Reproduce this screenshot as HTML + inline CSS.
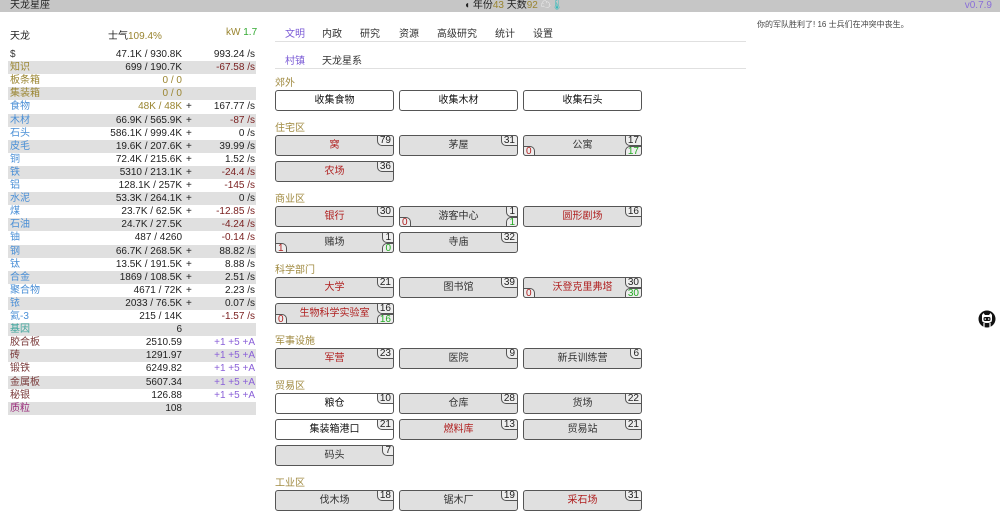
<!DOCTYPE html>
<html><head><meta charset="utf-8"><style>
*{margin:0;padding:0;box-sizing:border-box}
body{width:1000px;height:501px;overflow:hidden;background:#fff;font-family:"Liberation Sans","Noto Sans CJK SC",sans-serif;font-size:10px;color:#222;position:relative}
.top{position:absolute;left:0;top:0;width:1000px;height:12px;background:#c6c6c6;font-size:10px;line-height:12px}
.g{color:#9a8530}.gr{color:#3a3}.bl{color:#4a8fd6}.tl{color:#3aa39a}.rd{color:#7a2020}.br{color:#7a3a3a}.pu{color:#8a60d8}.mg{color:#9a2a7a}
.row{position:absolute;left:8px;width:248px;height:13.1px;line-height:13px}
.row.s{background:#e0e0e0}
.row .n{position:absolute;left:2px}
.row .v{position:absolute;right:74px}
.row .p{position:absolute;left:178px}
.row .r{position:absolute;right:1px}
.lab{position:absolute;left:275px;color:#a08a40;font-size:10px}
.b{position:absolute;width:119px;height:21px;border:1px solid #555;border-radius:3px;background:#e0e0e0;text-align:center;line-height:19px;font-size:10px;color:#333}
.b.w{background:#fff;color:#111}
.b.red{color:#b02020}
.c{position:absolute;right:-1px;top:-1px;border:1px solid #555;border-radius:0 3px 0 5px;background:#eee;font-size:10px;line-height:10px;padding:0 2px;color:#222;height:11px}
.bl0{position:absolute;left:-1px;bottom:-1px;border:1px solid #555;border-radius:0 5px 0 3px;font-size:10px;line-height:9px;padding:0 2px;color:#b02020;height:10px;background:#eee}
.br0{position:absolute;right:-1px;bottom:-1px;border:1px solid #555;border-radius:5px 0 3px 0;font-size:10px;line-height:9px;padding:0 2px;color:#2a2;height:10px;background:#eee}
.tab{position:absolute;top:25px;font-size:10px;color:#333}
</style></head><body>
<div class="top"><span style="position:absolute;left:10px">天龙星座</span>
<span style="position:absolute;left:464px">◖ 年份<span class="g">43</span> 天数<span class="g">92</span> <span style="color:#fff">☁</span><span style="color:#3bb">🌡</span></span>
<span style="position:absolute;right:8px;color:#8a6fd8">v0.7.9</span></div>

<div style="position:absolute;left:10px;top:27px;font-size:10px">天龙</div>
<div style="position:absolute;left:108px;top:27px">士气<span class="g">109.4%</span></div>
<div style="position:absolute;left:226px;top:27px"><span class="g">kW</span> <span class="gr">1.7</span></div>

<div style="position:absolute;left:0;top:48px">
<div class="row" style="top:0"><span class="n" style="color:#333">$</span><span class="v">47.1K / 930.8K</span><span class="r">993.24 /s</span></div>
<div class="row s" style="top:13.1px"><span class="n g">知识</span><span class="v">699 / 190.7K</span><span class="r rd">-67.58 /s</span></div>
<div class="row" style="top:26.2px"><span class="n g">板条箱</span><span class="v g">0 / 0</span></div>
<div class="row s" style="top:39.3px"><span class="n g">集装箱</span><span class="v g">0 / 0</span></div>
<div class="row" style="top:52.4px"><span class="n bl">食物</span><span class="v g">48K / 48K</span><span class="p">+</span><span class="r">167.77 /s</span></div>
<div class="row s" style="top:65.5px"><span class="n bl">木材</span><span class="v">66.9K / 565.9K</span><span class="p">+</span><span class="r rd">-87 /s</span></div>
<div class="row" style="top:78.6px"><span class="n bl">石头</span><span class="v">586.1K / 999.4K</span><span class="p">+</span><span class="r">0 /s</span></div>
<div class="row s" style="top:91.7px"><span class="n bl">皮毛</span><span class="v">19.6K / 207.6K</span><span class="p">+</span><span class="r">39.99 /s</span></div>
<div class="row" style="top:104.8px"><span class="n bl">铜</span><span class="v">72.4K / 215.6K</span><span class="p">+</span><span class="r">1.52 /s</span></div>
<div class="row s" style="top:117.9px"><span class="n bl">铁</span><span class="v">5310 / 213.1K</span><span class="p">+</span><span class="r rd">-24.4 /s</span></div>
<div class="row" style="top:131px"><span class="n bl">铝</span><span class="v">128.1K / 257K</span><span class="p">+</span><span class="r rd">-145 /s</span></div>
<div class="row s" style="top:144.1px"><span class="n bl">水泥</span><span class="v">53.3K / 264.1K</span><span class="p">+</span><span class="r">0 /s</span></div>
<div class="row" style="top:157.2px"><span class="n bl">煤</span><span class="v">23.7K / 62.5K</span><span class="p">+</span><span class="r rd">-12.85 /s</span></div>
<div class="row s" style="top:170.3px"><span class="n bl">石油</span><span class="v">24.7K / 27.5K</span><span class="r rd">-4.24 /s</span></div>
<div class="row" style="top:183.4px"><span class="n bl">铀</span><span class="v">487 / 4260</span><span class="r rd">-0.14 /s</span></div>
<div class="row s" style="top:196.5px"><span class="n bl">钢</span><span class="v">66.7K / 268.5K</span><span class="p">+</span><span class="r">88.82 /s</span></div>
<div class="row" style="top:209.6px"><span class="n bl">钛</span><span class="v">13.5K / 191.5K</span><span class="p">+</span><span class="r">8.88 /s</span></div>
<div class="row s" style="top:222.7px"><span class="n bl">合金</span><span class="v">1869 / 108.5K</span><span class="p">+</span><span class="r">2.51 /s</span></div>
<div class="row" style="top:235.8px"><span class="n bl">聚合物</span><span class="v">4671 / 72K</span><span class="p">+</span><span class="r">2.23 /s</span></div>
<div class="row s" style="top:248.9px"><span class="n bl">铱</span><span class="v">2033 / 76.5K</span><span class="p">+</span><span class="r">0.07 /s</span></div>
<div class="row" style="top:262px"><span class="n bl">氦-3</span><span class="v">215 / 14K</span><span class="r rd">-1.57 /s</span></div>
<div class="row s" style="top:275.1px"><span class="n tl">基因</span><span class="v">6</span></div>
<div class="row" style="top:288.2px"><span class="n br">胶合板</span><span class="v">2510.59</span><span class="r pu">+1 +5 +A</span></div>
<div class="row s" style="top:301.3px"><span class="n br">砖</span><span class="v">1291.97</span><span class="r pu">+1 +5 +A</span></div>
<div class="row" style="top:314.4px"><span class="n br">锻铁</span><span class="v">6249.82</span><span class="r pu">+1 +5 +A</span></div>
<div class="row s" style="top:327.5px"><span class="n br">金属板</span><span class="v">5607.34</span><span class="r pu">+1 +5 +A</span></div>
<div class="row" style="top:340.6px"><span class="n br">秘银</span><span class="v">126.88</span><span class="r pu">+1 +5 +A</span></div>
<div class="row s" style="top:353.7px"><span class="n mg">质粒</span><span class="v">108</span></div>
</div>

<span class="tab" style="left:285px;color:#7b5bd6">文明</span>
<span class="tab" style="left:322px">内政</span>
<span class="tab" style="left:360px">研究</span>
<span class="tab" style="left:399px">资源</span>
<span class="tab" style="left:437px">高级研究</span>
<span class="tab" style="left:495px">统计</span>
<span class="tab" style="left:533px">设置</span>
<div style="position:absolute;left:275px;top:41px;width:471px;height:1px;background:#e0e0e0"></div>
<span class="tab" style="top:52px;left:285px;color:#7b5bd6">村镇</span>
<span class="tab" style="top:52px;left:322px">天龙星系</span>
<div style="position:absolute;left:275px;top:68px;width:471px;height:1px;background:#e0e0e0"></div>

<div style="position:absolute;left:757px;top:19px;font-size:8px;color:#444">你的军队胜利了! 16 士兵们在冲突中丧生。</div>

<div class="lab" style="top:74px">郊外</div>
<div class="b w" style="left:275px;top:90px">收集食物</div>
<div class="b w" style="left:399px;top:90px">收集木材</div>
<div class="b w" style="left:523px;top:90px">收集石头</div>

<div class="lab" style="top:119px">住宅区</div>
<div class="b red" style="left:275px;top:135px">窝<span class="c">79</span></div>
<div class="b" style="left:399px;top:135px">茅屋<span class="c">31</span></div>
<div class="b" style="left:523px;top:135px">公寓<span class="c">17</span><span class="bl0">0</span><span class="br0">17</span></div>
<div class="b red" style="left:275px;top:161px">农场<span class="c">36</span></div>

<div class="lab" style="top:190px">商业区</div>
<div class="b red" style="left:275px;top:206px">银行<span class="c">30</span></div>
<div class="b" style="left:399px;top:206px">游客中心<span class="c">1</span><span class="bl0">0</span><span class="br0">1</span></div>
<div class="b red" style="left:523px;top:206px">圆形剧场<span class="c">16</span></div>
<div class="b" style="left:275px;top:232px">赌场<span class="c">1</span><span class="bl0">1</span><span class="br0">0</span></div>
<div class="b" style="left:399px;top:232px">寺庙<span class="c">32</span></div>

<div class="lab" style="top:261px">科学部门</div>
<div class="b red" style="left:275px;top:277px">大学<span class="c">21</span></div>
<div class="b" style="left:399px;top:277px">图书馆<span class="c">39</span></div>
<div class="b red" style="left:523px;top:277px">沃登克里弗塔<span class="c">30</span><span class="bl0">0</span><span class="br0">30</span></div>
<div class="b red" style="left:275px;top:303px">生物科学实验室<span class="c">16</span><span class="bl0">0</span><span class="br0">16</span></div>

<div class="lab" style="top:332px">军事设施</div>
<div class="b red" style="left:275px;top:348px">军营<span class="c">23</span></div>
<div class="b" style="left:399px;top:348px">医院<span class="c">9</span></div>
<div class="b" style="left:523px;top:348px">新兵训练营<span class="c">6</span></div>

<div class="lab" style="top:377px">贸易区</div>
<div class="b w" style="left:275px;top:393px">粮仓<span class="c">10</span></div>
<div class="b" style="left:399px;top:393px">仓库<span class="c">28</span></div>
<div class="b" style="left:523px;top:393px">货场<span class="c">22</span></div>
<div class="b w" style="left:275px;top:419px">集装箱港口<span class="c">21</span></div>
<div class="b red" style="left:399px;top:419px">燃料库<span class="c">13</span></div>
<div class="b" style="left:523px;top:419px">贸易站<span class="c">21</span></div>
<div class="b" style="left:275px;top:445px">码头<span class="c">7</span></div>

<div class="lab" style="top:474px">工业区</div>
<div class="b" style="left:275px;top:490px">伐木场<span class="c">18</span></div>
<div class="b" style="left:399px;top:490px">锯木厂<span class="c">19</span></div>
<div class="b red" style="left:523px;top:490px">采石场<span class="c">31</span></div>

<svg style="position:absolute;left:978px;top:310px" width="18" height="18" viewBox="0 0 18 18">
<circle cx="9" cy="9" r="8.5" fill="#111"/>
<path d="M4 5 L5.5 3 L7 5 L11 5 L12.5 3 L14 5 L14 10 Q14 13 9 13 Q4 13 4 10 Z" fill="#fff"/>
<rect x="5.5" y="7" width="7" height="4" rx="1.5" fill="#111"/>
<circle cx="7.3" cy="9" r="0.8" fill="#fff"/><circle cx="10.7" cy="9" r="0.8" fill="#fff"/>
<path d="M6 13 L6 17 M12 13 L12 17" stroke="#fff" stroke-width="1.2"/>
</svg>
</body></html>
